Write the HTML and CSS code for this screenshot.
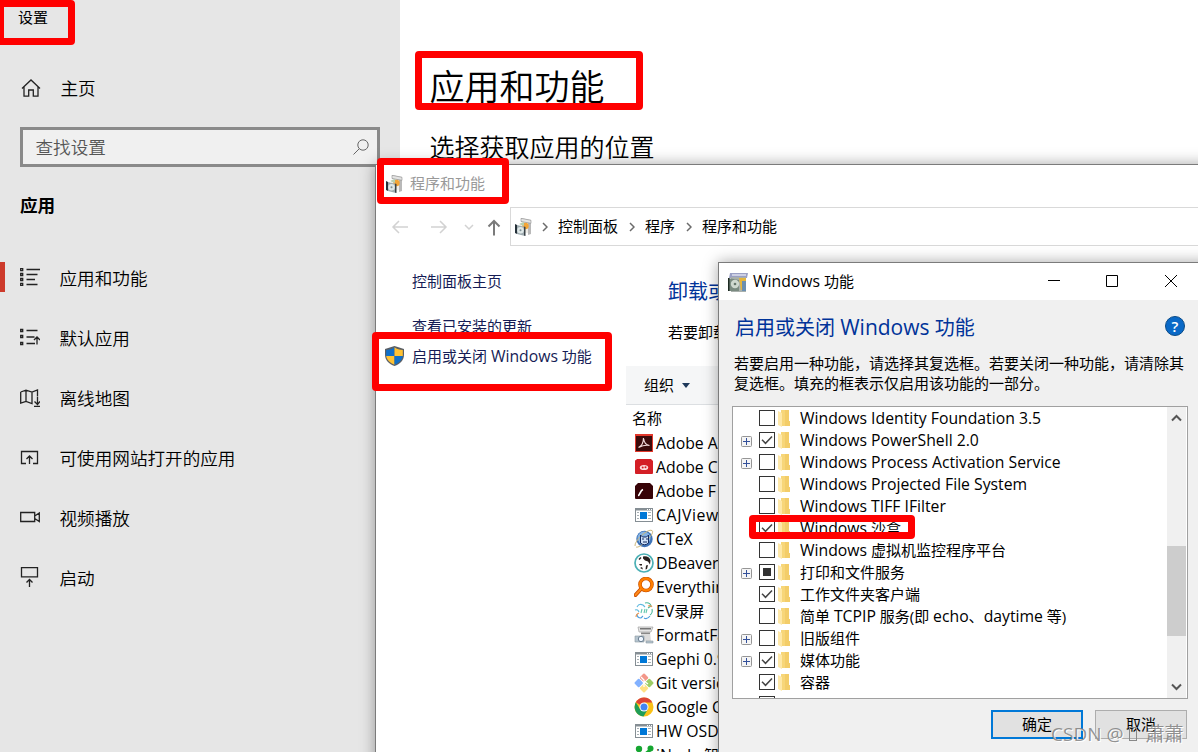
FILE: index.html
```
<!DOCTYPE html>
<html lang="zh-CN">

<head>
  <meta charset="UTF-8" />
  <meta name="viewport" content="width=device-width, initial-scale=1.0" />
  <title>应用和功能</title>
  <link rel="stylesheet" href="styles.css">
</head>

<body>

  <!-- shared icons -->
  <svg class="sprite">
    <symbol id="programs" viewBox="0 0 17 18">
      <path d="M6 0l10 2v14l-3 1V5L6 4z" fill="#b9b9b9" />
      <path d="M5 5l8 1v9l-8-1z" fill="#f1eee8" />
      <path d="M6 .3l10 2v3L6 3.500z" fill="#e4e4e4" stroke="#8f8f8f" stroke-width=".6" />
      <circle cx="10.500" cy="8" r="3.200" fill="#f3a536" />
      <path d="M4 6l5-2v4z" fill="#b7cfae" />
      <path d="M0 6l2 1v9l-2-1z" fill="#26323a" />
      <path d="M2 7l8 2v9l-8-2z" fill="#9eabb0" />
      <path d="M9 8.500l1.500.5v9L9 17.500z" fill="#3a4247" />
      <circle cx="5.500" cy="12.200" r="3.300" fill="#dfe8e8" />
      <circle cx="5.500" cy="12.200" r="1" fill="#7d8d93" />
    </symbol>
    <symbol id="chevron" viewBox="0 0 6 10">
      <path d="M1 1l4 4-4 4" fill="none" stroke="#6b6b6b" stroke-width="1.500" />
    </symbol>
    <symbol id="folder" viewBox="0 0 12 17">
      <path d="M3 0h8v11h1v5H3z" fill="#f7d679" />
      <path d="M7 0h4v11h1v5H7z" fill="#f3cd69" />
      <path d="M0 1l4 2v14l-4-2z" fill="#fee8a8" />
    </symbol>
    <symbol id="check" viewBox="0 0 16 16">
      <path d="M3 7.700l3.500 3.600L13 4.500" fill="none" stroke="#444" stroke-width="1.500" />
    </symbol>
    <symbol id="plus" viewBox="0 0 11 11">
      <rect x=".5" y=".5" width="10" height="10" rx="1" fill="#f5f5f5" stroke="#969696" />
      <path d="M2 5.500h7M5.500 2v7" stroke="#33509a" />
    </symbol>
    <symbol id="exe" viewBox="0 0 18 14">
      <rect x=".5" y=".5" width="17" height="13" fill="#fff" stroke="#858e94" />
      <path d="M0 1.500h18" stroke="#858e94" stroke-width="2" />
      <path d="M12 1.500h1M14 1.500h1M16 1.500h1" stroke="#fff" />
      <rect x="5" y="4" width="7" height="7" fill="#0078d7" />
      <path d="M2 4.500h2M2 7.500h2M2 10.500h2M13 4.500h3M13 7.500h3M13 10.500h3" stroke="#a8b0b4" />
    </symbol>
  </svg>

  <!-- settings -->
  <div class="settings">
    <div class="sidebar">
      <div class="app-title">设置</div>
      <div class="home">
        <svg class="home-icon" viewBox="0 0 20 18"><path d="M1 9.500L10 1l9 8.500M3 8v9.200h4.700V11h4.600v6.200H17V8" /></svg>
        <span>主页</span>
      </div>
      <div class="search">
        <span>查找设置</span>
        <svg class="search-icon" viewBox="0 0 16 16"><circle cx="10" cy="6" r="5.200" /><path d="M6.300 9.700L.5 15.500" /></svg>
      </div>
      <div class="group">应用</div>
      <ul class="nav">
        <li class="active">
          <svg viewBox="0 0 20 20"><path d="M.7 1.700h2v2h-2zM.7 6.500h2v2h-2zM.7 11.500h2v2h-2zM.7 16.300h2v2h-2zM6.500 2.500H20M6.500 7.500h11M6.500 12.500h8.500M6.500 17.500h11" /></svg>
          <span>应用和功能</span>
        </li>
        <li>
          <svg viewBox="0 0 20 20"><path d="M.7 2.500h2v2h-2zM.7 8.500h2v2h-2zM.7 15.500h2v2h-2zM6.500 3.500h11M6.500 10h8M6.500 16.500H15M17 17.500V10M14 13l3-3 3 3" /></svg>
          <span>默认应用</span>
        </li>
        <li>
          <svg viewBox="0 0 20 20"><path d="M.7 5L6 3.200l6 1.800 5.500-2v6M.7 5v11.200L6 14.500l6 2V5M6 3.200v11.300M17.500 9.500v8M14.500 14.500l3 3 2.500-3M14 19.500h6" /></svg>
          <span>离线地图</span>
        </li>
        <li>
          <svg viewBox="0 0 20 20"><path d="M6 16.500H1.500V4.500h16v12H13M9.500 17V9M6.500 12l3-3 3 3" /></svg>
          <span>可使用网站打开的应用</span>
        </li>
        <li>
          <svg viewBox="0 0 20 20"><path d="M.7 5.500h14v9h-14zM14.700 9l4.600-3v8.500l-4.600-3" /></svg>
          <span>视频播放</span>
        </li>
        <li>
          <svg viewBox="0 0 20 20"><path d="M1.500 0.700h16v9.200h-16zM9.500 20v-7.500M6.500 15.500l3-3 3 3" /></svg>
          <span>启动</span>
        </li>
      </ul>
    </div>
    <div class="content">
      <h1>应用和功能</h1>
      <h2>选择获取应用的位置</h2>
    </div>
  </div>

  <!-- programs and features window -->
  <div class="window programs">
    <div class="titlebar">
      <svg class="app-icon"><use href="#programs" /></svg>
      <span>程序和功能</span>
    </div>
    <div class="toolbar">
      <svg class="arrows" viewBox="0 0 133 38">
        <g fill="none" stroke="#d2d2d2" stroke-width="1.500">
          <path d="M31 20H16M22 14l-6 6 6 6M54 20h15M63 14l6 6-6 6" />
          <path d="M88 18l4 4 4-4" />
          <path d="M117 28.500V14M111.500 19.500l5.500-5.500 5.500 5.500" stroke="#7a7a7a" stroke-width="2" />
        </g>
      </svg>
      <div class="address">
        <svg class="app-icon"><use href="#programs" /></svg>
        <svg class="chev"><use href="#chevron" /></svg>
        <span>控制面板</span>
        <svg class="chev"><use href="#chevron" /></svg>
        <span>程序</span>
        <svg class="chev"><use href="#chevron" /></svg>
        <span>程序和功能</span>
      </div>
    </div>
    <div class="panes">
      <div class="tasks">
        <a class="main-link">控制面板主页</a>
        <a>查看已安装的更新</a>
        <a class="shielded">
          <svg class="shield" viewBox="0 0 19 20">
            <path d="M9.500 0L19 3v6c0 5-4 9-9.500 11C4 18 0 14 0 9V3z" fill="#5a5f66" />
            <path d="M9.500 1.200V10H1.200V4c3-.3 6-1 8.300-2.800z" fill="#0f6fc9" />
            <path d="M9.500 1.200V10h8.300V4c-3-.3-6-1-8.300-2.800z" fill="#ffc233" />
            <path d="M9.500 10H1.200c.5 4 4 7 8.300 8.700z" fill="#ffc233" />
            <path d="M9.500 10h8.300c-.5 4-4 7-8.300 8.700z" fill="#0f6fc9" />
          </svg>
          <span>启用或关闭 <span class="en">Windows</span> 功能</span>
        </a>
      </div>
      <div class="programs-main">
        <div class="heading">卸载或更改程序</div>
        <div class="hint">若要卸载程序</div>
        <div class="organize">组织<i></i></div>
        <div class="column">名称</div>
        <ul class="list">
          <li><svg viewBox="0 0 20 20"><rect x="1" y="1" width="18" height="18" fill="#e2382c" /><path d="M2 3h16v15H2z" fill="#3a0b0b" /><path d="M4.500 14.500c3-1.500 5-5 5-9.500.5 5 2.500 7 6 7.500-4-.8-7 0-11 2z" fill="none" stroke="#f3dcdc" stroke-width="1.200" /></svg>Adobe A</li>
          <li><svg viewBox="0 0 20 20"><path d="M1 4q0-1 1-1l1-1h14l2 2v12q0 1-1 1H2q-1 0-1-1z" fill="#d41f26" /><ellipse cx="10" cy="10.500" rx="4.200" ry="2.600" fill="#fbdcdc" /><circle cx="8.700" cy="10.500" r="1" fill="#d41f26" /><circle cx="11.500" cy="10.200" r="1" fill="#d41f26" /></svg>Adobe C</li>
          <li><svg viewBox="0 0 20 20"><path d="M1 5l3-3h12l3 3v12q0 1-1 1H2q-1 0-1-1z" fill="#370307" /><path d="M4 14.500c2 0 2-5 5-6" fill="none" stroke="#fff" stroke-width="1.700" /></svg>Adobe F</li>
          <li class="wide"><svg class="exe"><use href="#exe" /></svg>CAJView</li>
          <li><svg viewBox="0 0 20 20"><circle cx="10.500" cy="10" r="8.200" fill="#3e73b8" /><circle cx="10" cy="9" r="6.500" fill="#84b2e3" /><path d="M1 17C0 12 14-1 18 1.500S6 20 2 18" fill="none" stroke="#cdb87b" stroke-width="1" /><path d="M6.500 6v8q4 3.500 8 0V6l-2 2h-4z" stroke="#142b60" fill="#cfe2f8" /><path d="M8 10h2M12 10h2M9 13h4" stroke="#142b60" /></svg>CTeX</li>
          <li><svg viewBox="0 0 20 20"><circle cx="10" cy="10" r="9" fill="#fff" stroke="#4bb0b5" stroke-width="1.700" /><path d="M9 3.500q6-1 7.500 4l-.5 4-2-3-3-1-2-2zM4.500 6l2-2 1 1-2 2zM5 11h3v1.500H6zM6 15l2-1 1 2.500zM12 12.500l2-.5-1 4-1.500.5z" fill="#28201e" /></svg>DBeaver</li>
          <li><svg viewBox="0 0 20 20"><path d="M7 12l-5.500 6" stroke="#c94e00" stroke-width="4" stroke-linecap="round" /><circle cx="12" cy="7.500" r="6" fill="#fff" stroke="#c94e00" stroke-width="3.600" /><path d="M7 12l-5.500 6" stroke="#ff8a19" stroke-width="2" stroke-linecap="round" /><circle cx="12" cy="7.500" r="6" fill="none" stroke="#ff8000" stroke-width="2.400" /></svg>Everythin</li>
          <li><svg viewBox="0 0 20 20"><g fill="none" stroke-width="1.100"><path d="M3 6q2-4 6-2l2 2M1 9q3-1 4 2" stroke="#5fb9df" /><path d="M11 2q5-1 6 3l-3 2M18 8q1 4-2 6" stroke="#4bb89a" /><path d="M3 13q0 4 4 4l2-2M16 15q-3 4-6 2" stroke="#4b9fdf" /><path d="M2 16q0-3 3-4M14 5q3-1 4 1" stroke="#eb9854" /><path d="M7 12l1-4M10 12l1-4M12 12l1-4" stroke="#65c8b0" /></g></svg><span>EV<span class="cn">录屏</span></span></li>
          <li><svg viewBox="0 0 20 20"><path d="M4 2h15l-2 5H5z" fill="#e5e5e5" stroke="#a0a0a0" stroke-width=".7" /><path d="M6 3h11v1.500H6z" fill="#777" /><path d="M7 7h9l1 9H7z" fill="#dcdcdc" /><path d="M7 7.500h9v1.500H7z" fill="#888" /><path d="M1 11h9v6H1zM12 16h7v2h-7z" fill="#b6c5d0" stroke="#8c979f" stroke-width=".6" /><circle cx="7" cy="14" r="2.700" fill="#eef6ff" stroke="#6d8092" /></svg>FormatFa</li>
          <li><svg class="exe"><use href="#exe" /></svg>Gephi 0.9</li>
          <li><svg viewBox="0 0 20 20"><g transform="rotate(45 10 10)"><rect x="3" y="3" width="6.500" height="6.500" rx="1" fill="#f39789" /><rect x="10.500" y="3" width="6.500" height="6.500" rx="1" fill="#9ccc65" /><rect x="3" y="10.500" width="6.500" height="6.500" rx="1" fill="#82b1ff" /><rect x="10.500" y="10.500" width="6.500" height="6.500" rx="1" fill="#ffe082" /></g><path d="M7 4l3 3v7M10 8l4 3" fill="none" stroke="#fff" stroke-width="1.300" /></svg>Git versio</li>
          <li><svg viewBox="0 0 20 20"><circle cx="10" cy="10" r="9.500" fill="#fbc116" /><path d="M10 10L1.800 5.300A9.500 9.500 0 0 1 18.300 5.500H10z" fill="#dc4437" /><path d="M1.800 5.300A9.500 9.500 0 0 0 9.500 19.500L14 12 10 10 6 12z" fill="#1f9d58" /><circle cx="10" cy="10" r="4.500" fill="#fff" /><circle cx="10" cy="10" r="3.500" fill="#4285f4" /></svg>Google C</li>
          <li><svg class="exe"><use href="#exe" /></svg>HW OSD</li>
          <li><svg viewBox="0 0 20 20"><g fill="#16a631"><circle cx="5" cy="4" r="3.200" /><circle cx="16.500" cy="3.500" r="3" /><path d="M10 8l5-4 2 3-5 4zM2 11h6v4H2z" /></g></svg><span>iNode <span class="cn">智能</span></span></li>
        </ul>
      </div>
    </div>
  </div>

  <!-- windows features dialog -->
  <div class="window features">
    <div class="titlebar">
      <svg class="app-icon" viewBox="0 0 20 20">
        <path d="M2 1h18l-1 5H1z" fill="#9aa0c4" /><path d="M4 2h14v2H4z" fill="#cdd0e4" />
        <path d="M3 5h15v15H3z" fill="#a9b0ac" /><path d="M11 6h7v4l-2 8h-3z" fill="#e4b53c" />
        <path d="M14 9h4v10h-4z" fill="#6b8fb0" /><path d="M0 6l11 2v11H1z" fill="#7a8a80" />
        <path d="M0 6h1.500v13H0z" fill="#1d2a22" /><circle cx="7" cy="12" r="4.200" fill="#cfd8cf" /><circle cx="7" cy="12" r="1.300" fill="#66766c" />
      </svg>
      <span class="title"><span class="en">Windows</span> 功能</span>
      <svg class="controls" viewBox="0 0 129 12">
        <path d="M0 5.500h12M58.500.5h11v11h-11zM117 0l12 12M129 0l-12 12" fill="none" stroke="#000" />
      </svg>
    </div>
    <div class="dialog-body">
      <div class="dialog-head">
        <span>启用或关闭 <span class="en">Windows</span> 功能</span>
        <div class="help">?</div>
      </div>
      <p>若要启用一种功能，请选择其复选框。若要关闭一种功能，请清除其<br>复选框。填充的框表示仅启用该功能的一部分。</p>
      <div class="tree">
        <ul>
          <li><b></b><i></i><svg class="folder"><use href="#folder" /></svg><span class="en">Windows Identity Foundation 3.5</span></li>
          <li><b><svg><use href="#plus" /></svg></b><i><svg><use href="#check" /></svg></i><svg class="folder"><use href="#folder" /></svg><span class="en">Windows PowerShell 2.0</span></li>
          <li><b><svg><use href="#plus" /></svg></b><i></i><svg class="folder"><use href="#folder" /></svg><span class="en">Windows Process Activation Service</span></li>
          <li><b></b><i></i><svg class="folder"><use href="#folder" /></svg><span class="en">Windows Projected File System</span></li>
          <li><b></b><i></i><svg class="folder"><use href="#folder" /></svg><span class="en">Windows TIFF IFilter</span></li>
          <li><b></b><i><svg><use href="#check" /></svg></i><svg class="folder"><use href="#folder" /></svg><span><span class="en">Windows</span> 沙盒</span></li>
          <li><b></b><i></i><svg class="folder"><use href="#folder" /></svg><span><span class="en">Windows</span> 虚拟机监控程序平台</span></li>
          <li><b><svg><use href="#plus" /></svg></b><i class="partial"></i><svg class="folder"><use href="#folder" /></svg><span>打印和文件服务</span></li>
          <li><b></b><i><svg><use href="#check" /></svg></i><svg class="folder"><use href="#folder" /></svg><span>工作文件夹客户端</span></li>
          <li><b></b><i></i><svg class="folder"><use href="#folder" /></svg><span>简单 <span class="en">TCPIP</span> 服务(即 <span class="en">echo</span>、<span class="en">daytime</span> 等)</span></li>
          <li><b><svg><use href="#plus" /></svg></b><i></i><svg class="folder"><use href="#folder" /></svg><span>旧版组件</span></li>
          <li><b><svg><use href="#plus" /></svg></b><i><svg><use href="#check" /></svg></i><svg class="folder"><use href="#folder" /></svg><span>媒体功能</span></li>
          <li><b></b><i><svg><use href="#check" /></svg></i><svg class="folder"><use href="#folder" /></svg><span>容器</span></li>
          <li><b></b><i></i></li>
        </ul>
        <div class="scrollbar">
          <svg viewBox="0 0 19 22"><path d="M5 13.500L9.500 9l4.500 4.500" /></svg>
          <div class="thumb"></div>
          <svg viewBox="0 0 19 22"><path d="M5 8.500L9.500 13 14 8.500" /></svg>
        </div>
      </div>
      <div class="buttons">
        <button class="ok">确定</button>
        <button>取消</button>
      </div>
    </div>
  </div>

  <!-- red highlight frames -->
  <div class="mark mark-settings"></div>
  <div class="mark mark-apps"></div>
  <div class="mark mark-programs"></div>
  <div class="mark mark-toggle"></div>
  <div class="mark mark-sandbox"></div>

  <div class="watermark">CSDN @<i></i>蕭蕭</div>

</body>

</html>
```
FILE: styles.css
```
* {
  padding: 0;
  margin: 0;
  box-sizing: border-box;
}

body {
  position: relative;
  width: 1198px;
  height: 752px;
  overflow: hidden;
  background: #fff;
  color: #000;
  font-family: "Open Sans", "Noto Sans CJK SC", sans-serif;
  font-size: 15px;
  line-height: 20px;
  white-space: nowrap;
}

ul {
  list-style: none;
}

svg {
  display: block;
  flex: none;
}

.sprite {
  position: absolute;
  width: 0;
  height: 0;
}

/* latin words run slightly larger than the chinese text */
.en {
  font-size: 1.05em;
  line-height: 1;
}

.cn {
  font-size: 15px;
}

/* settings */
.settings {
  display: flex;
  height: 752px;
}

.sidebar {
  width: 400px;
  background: #e6e6e6;
  font-family: "Noto Sans CJK SC", sans-serif;
  font-size: 17.6px;
  font-weight: 350;
}

.sidebar path,
.sidebar circle {
  fill: none;
  stroke: #222;
  stroke-width: 1.3;
}

.app-title {
  padding: 7px 0 0 18px;
  font-size: 15px;
  font-weight: 400;
}

.home {
  display: flex;
  align-items: center;
  height: 60px;
  margin-top: 31px;
  padding-left: 21px;
}

.home-icon {
  width: 20px;
  height: 18px;
  margin-right: 19.5px;
}

.search {
  display: flex;
  align-items: center;
  justify-content: space-between;
  width: 360px;
  height: 40px;
  margin: 9px 0 0 20px;
  padding: 0 8px 0 12.5px;
  border: 3px solid #8a8a8a;
  background: #f0f0f0;
  color: #555;
}

.search-icon {
  width: 16px;
  height: 16px;
}

.search-icon path,
.search-icon circle {
  stroke: #666;
  stroke-width: 1;
}

.group {
  margin: 28px 0 32px 20px;
  font-weight: 700;
}

.nav li {
  display: flex;
  align-items: center;
  height: 60px;
  padding-left: 20px;
}

.nav li svg {
  width: 20px;
  height: 20px;
  margin-right: 19.5px;
}

.nav span {
  margin-top: 2px;
}

.nav .active {
  height: 30px;
  margin: 47px 0 15px;
  padding-left: 15px;
  border-left: 5px solid #cd3a2b;
}

.content {
  padding: 62px 0 0 29.5px;
}

h1 {
  font-size: 35px;
  font-weight: 350;
  line-height: 50px;
}

h2 {
  margin-top: 15px;
  font-size: 25px;
  font-weight: 350;
  line-height: 40px;
}

/* windows */
.window {
  position: absolute;
  border: 1px solid #7b7b7b;
  box-shadow: 0 0 14px rgba(0, 0, 0, 0.35);
}

.titlebar {
  display: flex;
  align-items: center;
}

.titlebar span {
  margin-top: -1px;
}

.programs {
  top: 164px;
  left: 375px;
  width: 860px;
  height: 620px;
  background: #fff;
}

.programs .titlebar {
  height: 38px;
  padding-left: 10px;
  color: #999;
}

.app-icon {
  width: 17px;
  height: 18px;
  margin-right: 7px;
}

.programs .titlebar span {
  margin-top: -2px;
}

.toolbar {
  display: flex;
  height: 39px;
  margin-top: 4px;
  padding-left: 1px;
}

.arrows {
  width: 133px;
  height: 38px;
}

.address {
  display: flex;
  flex: 1;
  align-items: center;
  padding-left: 4px;
  border: 1px solid #d9d9d9;
}

.address .app-icon {
  margin-right: 10px;
}

.chev {
  width: 6px;
  height: 10px;
}

.address span {
  margin: -2px 11px 0 10px;
}

.panes {
  display: flex;
}

.tasks {
  width: 250px;
  padding: 25px 0 0 36px;
  color: #151c55;
}

.tasks a {
  display: block;
  height: 30px;
}

.tasks .main-link {
  height: 45px;
}

.tasks .shielded {
  display: flex;
  margin-left: -27px;
}

.shield {
  width: 19px;
  height: 20px;
  margin-right: 8px;
}

.programs-main {
  flex: 1;
}

.heading {
  padding: 33px 0 0 42px;
  color: #003399;
  font-size: 20px;
  line-height: 26px;
}

.hint {
  padding: 17px 0 0 42px;
}

.organize {
  display: flex;
  align-items: center;
  height: 39px;
  margin-top: 24px;
  padding-left: 18px;
  background: #f5f6f7;
  border-bottom: 1px solid #dcdfe2;
}

.organize i {
  margin-left: 8px;
  border: 4px solid transparent;
  border-top: 5px solid #1e395b;
  border-bottom: 0;
}

.column {
  padding: 3px 0 3px 6px;
}

.list li {
  display: flex;
  align-items: center;
  height: 24px;
  padding-left: 8px;
  font-size: 15.8px;
}

.list .wide {
  letter-spacing: 0.6px;
}

.list svg {
  width: 20px;
  height: 20px;
  margin-right: 2px;
}

.list .exe {
  width: 18px;
  height: 14px;
  margin: 0 3px 0 1px;
}

/* windows features */
.features {
  top: 262px;
  left: 718px;
  width: 500px;
  height: 520px;
  background: #f0f0f0;
}

.features .titlebar {
  height: 37px;
  padding-left: 9px;
  background: #fff;
}

.features .app-icon {
  width: 20px;
  height: 20px;
  margin-right: 5px;
}

.title {
  width: 101px;
}

.controls {
  width: 129px;
  height: 12px;
  margin: -1px 0 0 194px;
}

.dialog-body {
  width: 468px;
  padding: 14px 0 0 13px;
}

.dialog-head {
  display: flex;
  justify-content: space-between;
  height: 26px;
  padding: 0 2px 0 3px;
  color: #003399;
  font-size: 20px;
  line-height: 27px;
}

.help {
  width: 20px;
  height: 20px;
  margin: 2px 0 0;
  border: 1px solid #0a4a86;
  border-radius: 50%;
  background: #0a69c7;
  color: #fff;
  font-size: 15px;
  font-weight: 600;
  line-height: 18px;
  text-align: center;
}

.dialog-body p {
  margin: 13px 0 13px 2px;
}

.tree {
  display: flex;
  justify-content: space-between;
  width: 456px;
  height: 293px;
  overflow: hidden;
  border: 1px solid #a0a0a0;
  background: #fff;
}

.tree li {
  display: flex;
  align-items: center;
  height: 22px;
  padding-left: 8px;
}

.tree li > .en {
  line-height: 20px;
}

.tree b {
  width: 18px;
  padding-top: 2px;
}

.tree b svg {
  width: 11px;
  height: 11px;
}

.tree i {
  width: 16px;
  height: 16px;
  margin-right: 3px;
  border: 1px solid #333;
}

.tree i svg {
  width: 16px;
  height: 16px;
  margin: -1px;
}

.tree .partial {
  padding: 3px;
  background: #333 content-box;
}

.folder {
  width: 12px;
  height: 17px;
  margin-right: 10px;
}

.scrollbar {
  width: 20px;
  padding-right: 1px;
  background: linear-gradient(to right, #f0f0f0 19px, #fff 19px);
}

.scrollbar svg {
  width: 19px;
  height: 22px;
}

.scrollbar path {
  fill: none;
  stroke: #555;
  stroke-width: 2;
}

.thumb {
  height: 90px;
  margin: 117px 0 40px;
  background: #cdcdcd;
}

.buttons {
  display: flex;
  justify-content: flex-end;
  gap: 12px;
  width: 455px;
  margin-top: 11px;
}

button {
  width: 92px;
  height: 29px;
  padding-bottom: 2px;
  border: 1px solid #adadad;
  background: #e1e1e1;
  font: inherit;
}

.ok {
  border: 2px solid #0078d7;
}

/* highlight frames */
.mark {
  position: absolute;
  border: 7px solid #f00;
  border-radius: 4px;
}

.mark-settings {
  top: 0;
  left: -3px;
  width: 78px;
  height: 45px;
}

.mark-apps {
  top: 51px;
  left: 415px;
  width: 228px;
  height: 59px;
}

.mark-programs {
  top: 158px;
  left: 377px;
  width: 132px;
  height: 46px;
}

.mark-toggle {
  top: 332px;
  left: 372px;
  width: 240px;
  height: 59px;
}

.mark-sandbox {
  top: 515px;
  left: 749px;
  width: 166px;
  height: 24px;
}

.watermark {
  position: absolute;
  top: 722px;
  left: 1051px;
  display: flex;
  align-items: center;
  color: rgba(120, 120, 120, 0.8);
  font-size: 19px;
  line-height: 24px;
  text-shadow: 1px 1px 0 #fff;
}

.watermark i {
  width: 8px;
  height: 14px;
  margin: 0 8px 0 6px;
  border: 1px solid #888;
}
```
